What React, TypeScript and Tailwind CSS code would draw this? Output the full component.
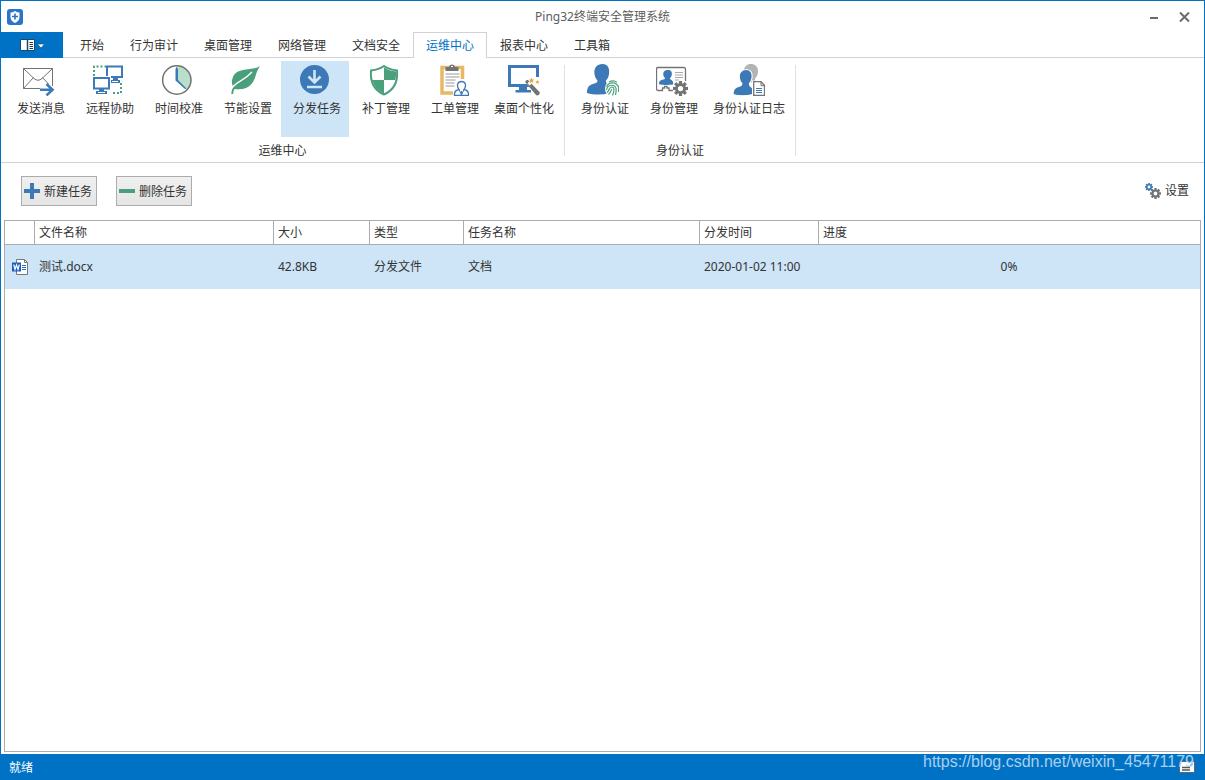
import type { ReactNode } from "react";

const BLUE = "#3d79b6";
const GREEN = "#4a9f7d";
const GRAY = "#737373";

function Icon({ children }: { children: ReactNode }) {
  return (
    <svg width="32" height="32" viewBox="0 0 32 32" fill="none" aria-hidden="true" className="block">
      {children}
    </svg>
  );
}

function Gear({ cx, cy, r, color }: { cx: number; cy: number; r: number; color: string }) {
  return (
    <g transform={`translate(${cx} ${cy}) scale(${r / 8})`} fill={color}>
      {[0, 45, 90, 135, 180, 225, 270, 315].map((a) => (
        <rect key={a} x="-1.7" y="-8" width="3.4" height="4" transform={`rotate(${a})`} />
      ))}
      <circle r="4.3" fill="none" stroke={color} strokeWidth="3" />
    </g>
  );
}

const sendIcon = (
  <Icon>
    <path d="M17 24.500H.5v-20h29V22" stroke={GRAY} />
    <path d="M.5 4.500 11 14.500q4 3.500 8 0L29.500 4.500M.5 24.500 10.500 13.500M19.500 13.500l6 6.500" stroke={GRAY} />
    <path d="M17 25.700h13M23.500 20l6 5.700-6 5.700" stroke={BLUE} strokeWidth="2.600" />
  </Icon>
);

const remoteIcon = (
  <Icon>
    <path d="M2 12V2.500h12" stroke={GREEN} strokeWidth="2" strokeDasharray="2 2" />
    <path d="M29 19v10H19" stroke={GREEN} strokeWidth="2" strokeDasharray="2 2" />
    <path d="M15 12V2.500h15V13H19" stroke={BLUE} strokeWidth="2" />
    <path d="M21 14h5v2h2v3h-9v-3h2z" fill={BLUE} />
    <rect x="2" y="14" width="15" height="10.500" stroke={BLUE} strokeWidth="2" fill="#fff" />
    <path d="M7 25h5v2h3v3H4v-3h3z" fill={BLUE} />
    <path d="M6 28.500h7M20 17.500h6" stroke="#fff" />
  </Icon>
);

const clockIcon = (
  <Icon>
    <path d="M15.500 2a14 14 0 0 1 10.500 24L15.500 16z" fill="#b7dfca" />
    <circle cx="15.800" cy="16" r="14.200" stroke={GRAY} strokeWidth="1.500" />
    <path d="M14.500 5 15.500 3l1.500 2v11l8.500 8.500L24 25 14.500 16.500z" fill={BLUE} />
  </Icon>
);

const leafIcon = (
  <Icon>
    <path d="M30 2C23 7 7 3 3 13c-2 5-1 8 .5 10C1.500 26 1.500 28 1.300 30h1.900c0-2 .5-3.500 1.300-5 13 2 19-5 21-13C26.500 8 28 5 30 2z" fill={GREEN} />
    <path d="M3 23C6 18 14 17 22 8" stroke="#fff" strokeWidth="1.300" />
  </Icon>
);

const downloadIcon = (
  <Icon>
    <circle cx="15.500" cy="15.500" r="14.500" fill={BLUE} />
    <path d="M15.500 6v12M9.500 12.500l6 6 6-6M8 23h15" stroke="#cfe6f8" strokeWidth="2.600" />
  </Icon>
);

const shieldIcon = (
  <Icon>
    <path d="M16 2c4 3 8 4 13 4.500 1 11-3 19.500-13 24C6 26 2 17.500 3 6.500 8 6 12 5 16 2z" fill="#fff" stroke={GREEN} strokeWidth="2" />
    <path d="M16 3.500c3.500 2.500 7.500 3.500 12 4 .2 3 0 6-.8 8.500H16z" fill={GREEN} />
    <path d="M16 16v13.500C9.500 26.500 6 22 4.500 16z" fill={GREEN} />
  </Icon>
);

const clipboardIcon = (
  <Icon>
    <path d="M16 29H5V3.500h20.500V15" stroke="#e9b866" strokeWidth="3.500" />
    <path d="M8.500 7V3H12c0-3.500 6-3.500 6 0h3.500v4z" fill={GRAY} />
    <path d="M14 2.500h2" stroke="#fff" />
    <path d="M8.500 10h14M8.500 13h14M8.500 16h10M8.500 19h9M8.500 22h9" stroke="#999" />
    <path d="M17.500 31.500c-.3-4 1-5.500 4.500-6-2.800-4-1.500-8 2.500-8s5.300 4 2.500 8c3.500.5 4.800 2 4.500 6z" fill="#fff" stroke={BLUE} strokeWidth="1.300" />
    <path d="M22 25.500 24.500 31 27 25.500M24.500 27v4" stroke={BLUE} />
  </Icon>
);

const desktopIcon = (
  <Icon>
    <path d="M21 21.500H1.500V2.500h28V13" stroke={BLUE} strokeWidth="3" />
    <path d="M11 22h8v4h4v2.500H7.500V26H11z" fill={BLUE} />
    <path d="M16.500 17.500 20 14l13 14-3 5z" fill="#fff" />
    <path d="M17.500 18.500c-.7-1.500 1-3 2.500-2.500L31.500 28c1 2-1.500 4.500-3.500 3z" fill={GRAY} />
    <path d="m19.500 19.300 2-2 2.200 2.300-2 2z" fill="#fff" />
    <path d="m23.500 13.500.8 1.900 2 .2-1.500 1.300.5 2-1.800-1-1.800 1 .5-2-1.500-1.300 2-.2zM29.500 16l.7 1.300h1.400l-1 1 .3 1.500-1.400-.8-1.400.8.3-1.500-1-1h1.400z" fill="#e9a63d" />
  </Icon>
);

const PERSON =
  "M15.500 0C10 0 6.500 4 7.500 10c.3 3 1.500 5 3 6.500-.2 2-1 2.500-3 3C2 21 0 23 0 29c7 2 15 2 23 0v-7l-2-2c-1.500-.5-2-1.500-2-3.500 1.500-1.500 2.500-3 3-6.500C23 4 20.500 0 15.500 0z";

const authIcon = (
  <Icon>
    <path d={PERSON} fill={BLUE} />
    <ellipse cx="26" cy="24.500" rx="8" ry="9" fill="#fff" />
    <path
      d="M22 18c2.500-1.500 5.500-1.500 8 .3M19.500 22.500c2.500-5 10-5 12 .5.3 2 .3 3 0 5M19.500 26c.8-6 9-6.500 9.700-.5 0 2 0 3-.7 5.500M20 28.500c3-2 1.500-5.500 4.800-5.500 3 0 2.500 4.500.7 8.500M21.500 30.500c2-1.500 2.500-3.500 3.200-5.500"
      stroke={GREEN}
      strokeWidth="1.200"
    />
  </Icon>
);

const manageIcon = (
  <Icon>
    <path
      d="M17 26.500h-4v-2.500h-2v-1.500H8.500v1.500h-2v2.500H2a1.500 1.500 0 0 1-1.500-1.500V5A1.500 1.500 0 0 1 2 3.500h26A1.500 1.500 0 0 1 29.500 5v12"
      stroke={GRAY}
      strokeWidth="1.300"
    />
    <g transform="translate(3 6) scale(.58 .49)">
      <path d={PERSON} fill={BLUE} />
      <path d="M18 20.500c5 1 7 3 6.500 9H12z" fill={BLUE} />
    </g>
    <path d="M19 8.500h8M19 11h8M19 13.500h8M19 16h4" stroke="#aaa" />
    <circle cx="24.500" cy="24.500" r="8" fill="#fff" />
    <Gear cx={24.500} cy={24.500} r={7.500} color={GRAY} />
  </Icon>
);

const logIcon = (
  <Icon>
    <path d="M11 6c1-8 14-8 14 1 0 4-1.500 6-3 7.500 0 2 .5 3 2.500 4H13z" fill="#b3b3b3" />
    <g transform="translate(0 5.500) scale(.86 .86)">
      <path d={PERSON} fill={BLUE} stroke="#fff" strokeWidth="1.200" />
    </g>
    <path d="M19 16.500h9.500l3.500 4V32H19z" fill="#fff" />
    <path d="M20.700 17.700H28l3.500 3.800v10H20.700z" fill="#fff" stroke={GRAY} strokeWidth="1.300" />
    <path d="M28 17.700v4h3.500" stroke={GRAY} />
    <path d="M23 24.500h6M23 26.500h6M23 28.500h6" stroke={BLUE} />
  </Icon>
);

type Item = { label: string; icon: ReactNode; size?: "medium" | "large"; active?: boolean };

const groups: { name: string; items: Item[] }[] = [
  {
    name: "运维中心",
    items: [
      { label: "发送消息", icon: sendIcon },
      { label: "远程协助", icon: remoteIcon },
      { label: "时间校准", icon: clockIcon },
      { label: "节能设置", icon: leafIcon },
      { label: "分发任务", icon: downloadIcon, active: true },
      { label: "补丁管理", icon: shieldIcon },
      { label: "工单管理", icon: clipboardIcon },
      { label: "桌面个性化", icon: desktopIcon, size: "medium" },
    ],
  },
  {
    name: "身份认证",
    items: [
      { label: "身份认证", icon: authIcon },
      { label: "身份管理", icon: manageIcon },
      { label: "身份认证日志", icon: logIcon, size: "large" },
    ],
  },
];

const tabs = ["开始", "行为审计", "桌面管理", "网络管理", "文档安全", "运维中心", "报表中心", "工具箱"];

const columns = ["文件名称", "大小", "类型", "任务名称", "分发时间", "进度"];

function RibbonItem({ label, icon, active, size }: Item) {
  const width = size === "large" ? "w-[84px]" : size === "medium" ? "w-[72px]" : "w-[68px]";
  return (
    <button
      type="button"
      className={`flex h-[76px] flex-col items-center pt-[3px] ${width} ${
        active ? "bg-[#cde5f7]" : "hover:bg-[#e5f1fb]"
      }`}
    >
      {icon}
      <span className={`mt-[5px] whitespace-nowrap leading-4 ${size ? "" : "pl-1"}`}>{label}</span>
    </button>
  );
}

function TitleBar() {
  return (
    <header className="grid h-[31px] grid-cols-[1fr_auto_1fr] items-center px-1.5">
      <svg width="16" height="16" viewBox="0 0 16 16" aria-hidden="true">
        <rect width="16" height="16" rx="3" fill="#2b74cc" />
        <path d="M8 2c1.500 1 3 1.500 4.500 1.500v4.500c0 3-2 5-4.500 6-2.500-1-4.500-3-4.500-6V3.500C5 3.500 6.500 3 8 2z" fill="#fff" />
        <path d="M8 4.500v6M5 7.500h6" stroke="#2b74cc" strokeWidth="1.600" />
      </svg>
      <h1 className="text-[#5c5c5c]">Ping32终端安全管理系统</h1>
      <div className="flex items-center justify-end gap-5 pr-2">
        <button type="button" aria-label="最小化">
          <svg width="10" height="10" viewBox="0 0 10 10">
            <path d="M1 6h8" stroke="#6b6b6b" strokeWidth="2" />
          </svg>
        </button>
        <button type="button" aria-label="关闭">
          <svg width="11" height="10" viewBox="0 0 11 10">
            <path d="m1 .5 9 9M10 .5l-9 9" stroke="#6b6b6b" strokeWidth="2" />
          </svg>
        </button>
      </div>
    </header>
  );
}

function TabBar() {
  return (
    <nav className="flex h-[26px] items-stretch">
      <button type="button" aria-label="文件" className="flex w-[62px] items-center justify-center bg-[#0072c6]">
        <svg width="26" height="14" viewBox="0 0 26 14" aria-hidden="true">
          <path d="M1.500 1.500h14v11h-14z" fill="#fff" stroke="#164870" />
          <path d="M8.500 1v12" stroke="#164870" strokeWidth="1.500" />
          <path d="M10.500 4.500H14M10.500 6.500H14M10.500 8.500H14M10.500 10.500H14" stroke="#333" />
          <path d="M18.500 6h7L22 10z" fill="#fff" stroke="#164870" strokeWidth=".6" />
        </svg>
      </button>
      <div className="w-1 border-b border-[#d2d2d2]" />
      {tabs.map((tab) => (
        <button
          key={tab}
          type="button"
          className={
            tab === "运维中心"
              ? "border-x border-t border-[#d2d2d2] px-3 text-[#0072c6]"
              : "border-b border-[#d2d2d2] px-[13px] pt-0.5"
          }
        >
          {tab}
        </button>
      ))}
      <div className="flex-1 border-b border-[#d2d2d2]" />
    </nav>
  );
}

function Ribbon() {
  return (
    <section className="flex border-b border-[#d2d2d2] pb-[3px] pl-1 pt-[3px]">
      {groups.map((group) => (
        <div key={group.name} className="flex">
          <div className="flex flex-col">
            <div className="flex gap-px">
              {group.items.map((item) => (
                <RibbonItem key={item.label} {...item} />
              ))}
            </div>
            <p className="mt-1.5 text-center leading-4">{group.name}</p>
          </div>
          <div className="mx-1 mb-[3px] mt-1 w-px bg-[#e1e1e1]" />
        </div>
      ))}
    </section>
  );
}

function Toolbar() {
  const button =
    "flex h-[30px] w-[76px] items-center gap-1 border border-[#acacac] bg-linear-to-b from-[#f0f0f0] to-[#e5e5e5] pl-0.5 whitespace-nowrap";
  return (
    <div className="flex items-center justify-between pb-3.5 pl-5 pr-[15px] pt-[13px]">
      <div className="flex gap-[19px]">
        <button type="button" className={button}>
          <svg width="16" height="16" viewBox="0 0 16 16" aria-hidden="true">
            <path d="M8 0v16M0 8h16" stroke={BLUE} strokeWidth="4" />
          </svg>
          <span className="pt-0.5">新建任务</span>
        </button>
        <button type="button" className={button}>
          <svg width="16" height="16" viewBox="0 0 16 16" aria-hidden="true">
            <path d="M0 8h16" stroke={GREEN} strokeWidth="4" />
          </svg>
          <span className="pt-0.5">删除任务</span>
        </button>
      </div>
      <button type="button" className="flex items-center gap-1">
        <svg width="16" height="16" viewBox="0 0 16 16" aria-hidden="true">
          <Gear cx={4} cy={4} r={4} color={BLUE} />
          <Gear cx={10.500} cy={10.500} r={5.500} color={GRAY} />
        </svg>
        设置
      </button>
    </div>
  );
}

function WordIcon() {
  return (
    <svg width="16" height="16" viewBox="0 0 16 16" className="block" aria-hidden="true">
      <path d="M4.500.5h8l3 3v12h-11z" fill="#fff" stroke="#777" />
      <path d="M12.500.5v3h3" fill="none" stroke="#777" />
      <path d="M10 6.500h4M10 8.500h4M10 10.500h4" stroke="#2a6fc4" />
      <path d="M0 3.500h9v9H0z" fill="#1d5bbf" />
      <path d="m1.700 5.500 1.300 5 1.500-4.500L6 10.500l1.300-5" fill="none" stroke="#fff" strokeWidth="1.200" />
    </svg>
  );
}

function TaskTable() {
  return (
    <div className="mx-[3px] mb-0.5 flex-1 border border-[#acacac]">
      <table className="w-full table-fixed border-separate border-spacing-0 text-left">
        <colgroup>
          <col className="w-[29px]" />
          <col className="w-[239px]" />
          <col className="w-[96px]" />
          <col className="w-[94px]" />
          <col className="w-[236px]" />
          <col className="w-[119px]" />
          <col />
        </colgroup>
        <thead>
          <tr className="h-6">
            <th aria-label="图标" className="border-b border-[#acacac] p-0" />
            {columns.map((column) => (
              <th key={column} className="border-b border-l border-[#acacac] p-0 pl-1 font-normal">
                {column}
              </th>
            ))}
          </tr>
        </thead>
        <tbody>
          <tr className="h-11 bg-[#cde5f7]">
            <td className="p-0 pl-[7px]">
              <WordIcon />
            </td>
            <td className="p-0 pl-[5px]">测试.docx</td>
            <td className="p-0 pl-[5px]">42.8KB</td>
            <td className="p-0 pl-[5px]">分发文件</td>
            <td className="p-0 pl-[5px]">文档</td>
            <td className="p-0 pl-[5px]">2020-01-02 11:00</td>
            <td className="p-0 text-center">0%</td>
          </tr>
        </tbody>
      </table>
    </div>
  );
}

export default function App() {
  return (
    <div className="relative flex min-h-screen flex-col border border-b-0 border-[#0072c6] bg-white font-['Noto_Sans','Noto_Sans_CJK_SC',sans-serif] text-xs text-[#333]">
      <TitleBar />
      <TabBar />
      <Ribbon />
      <Toolbar />
      <TaskTable />
      <footer className="flex h-[26px] items-center justify-between bg-[#0072c6] px-2 text-white">
        <span className="pt-0.5">就绪</span>
        <svg width="17" height="14" viewBox="0 0 17 14" aria-hidden="true">
          <rect x=".5" y="1.500" width="15" height="11" fill="#fff" stroke="#5a6670" />
          <path d="M3 7.500h8M3 10h8" stroke="#555" strokeWidth="1.300" />
          <path d="M12 4h2M12 4v2" stroke="#2b74cc" />
        </svg>
      </footer>
      <span className="absolute bottom-2 right-2.5 font-['Liberation_Sans',sans-serif] text-base leading-5 text-[#a9cfec]">
        https://blog.csdn.net/weixin_45471179
      </span>
    </div>
  );
}
